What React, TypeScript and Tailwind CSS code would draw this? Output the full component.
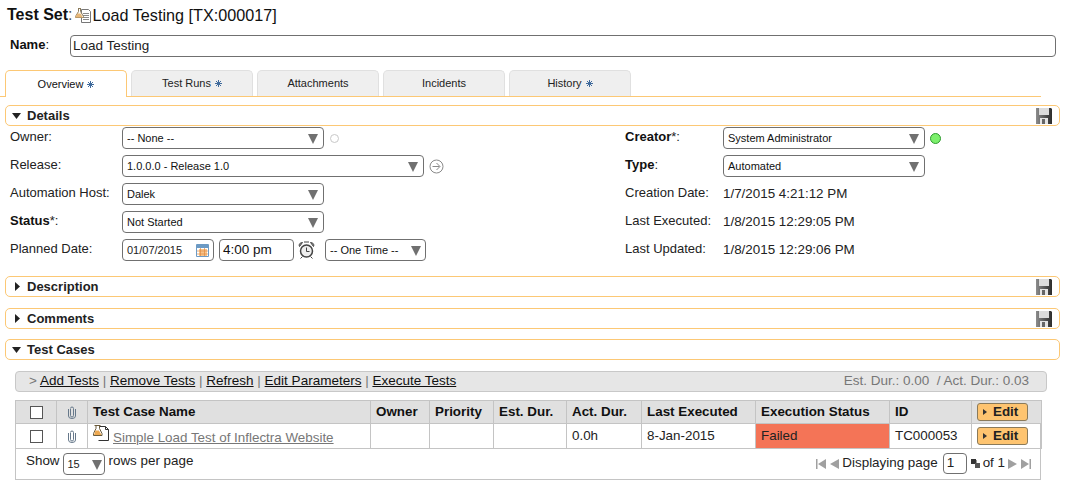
import type { ReactNode } from 'react'

function Arrow({ className = '' }: { className?: string }) {
  return (
    <svg className={className} width="10" height="11" viewBox="0 0 10 11">
      <path d="M0 1h10L5 11z" fill="#707070" />
    </svg>
  )
}

function Select({ text, className, arrow = 'pr-[5px]' }: { text: string; className: string; arrow?: string }) {
  return (
    <div className={`flex h-[22px] items-center justify-between rounded-[4px] border border-[#707070] bg-white pl-[4px] text-[11px] text-[#111] ${arrow} ${className}`}>
      <span>{text}</span>
      <Arrow />
    </div>
  )
}

function Star() {
  return (
    <svg className="ml-[4px] inline-block" width="7" height="7" viewBox="0 0 7 7" stroke="#3f6a9c" strokeWidth="1">
      <path d="M3.500 0v7M0 3.500h7M1 1l5 5M6 1L1 6" />
    </svg>
  )
}

function Tab({ label, active, star }: { label: string; active?: boolean; star?: boolean }) {
  return (
    <div
      className={
        active
          ? 'z-10 -mb-px flex h-[27px] w-[122px] items-center justify-center rounded-t-[5px] border border-b-0 border-[#fcc875] bg-white text-[11px] text-[#111]'
          : 'flex h-[26px] w-[122px] items-center justify-center rounded-t-[5px] border border-b-0 border-[#e0e0e0] bg-[#efefef] text-[11px] text-[#222]'
      }
    >
      {label}
      {star && <Star />}
    </div>
  )
}

function Floppy() {
  return (
    <svg width="16" height="16" viewBox="0 0 16 16">
      <defs>
        <linearGradient id="floppy" x1="0" x2="1" y1="0" y2="0">
          <stop offset="0" stopColor="#8c8c8c" />
          <stop offset="1" stopColor="#2c2c2c" />
        </linearGradient>
      </defs>
      <path d="M0 0h15l1 1v15H0z" fill="url(#floppy)" />
      <path d="M3 0h10v7H3z" fill="#dcdcdc" />
      <path d="M4 10h8v6H4z" fill="#e4e4e4" />
      <path d="M6 11h3v5H6z" fill="#666" />
    </svg>
  )
}

function SectionBar({ title, open, save }: { title: string; open?: boolean; save?: boolean }) {
  return (
    <div className="mr-[6px] ml-[5px] flex h-[21px] items-center justify-between rounded-[5px] border border-[#fcc875] bg-white pr-[7px] pl-[6px]">
      <div className="flex items-center text-[13px] font-bold text-[#222]">
        {open ? (
          <svg className="mr-[6px]" width="9" height="6" viewBox="0 0 9 6">
            <path d="M0 0h9L4.500 6z" fill="#222" />
          </svg>
        ) : (
          <svg className="mr-[7px] ml-[3px]" width="5" height="9" viewBox="0 0 5 9">
            <path d="M0 0l5 4.500L0 9z" fill="#222" />
          </svg>
        )}
        {title}
      </div>
      {save && <Floppy />}
    </div>
  )
}

function TestSetIcon() {
  return (
    <svg width="17" height="17" viewBox="0 0 17 17">
      <path d="M7.500 2.500h7l2 2v11h-9z" fill="#fff" stroke="#777" />
      <path d="M9 6.500h6M9 8.500h6M9 10.500h6M9 12.500h6" stroke="#8a8a8a" />
      <path d="M4 1.500h3M4.500 1.500v3l-3 5v1h8v-1l-3-5v-3" fill="#fff" stroke="#8a7a5a" />
      <path d="M3.500 6.500h3l2.500 4h-8z" fill="#e8b878" />
    </svg>
  )
}

function TestCaseIcon() {
  return (
    <svg width="17" height="17" viewBox="0 0 17 17">
      <path d="M5.500 1.500h7l3 3v11h-10" fill="#fff" stroke="#333" />
      <path d="M12.500 1.500v3h3" fill="none" stroke="#333" />
      <path d="M1.500 0.500h6M3 0.500v3l-2.500 5v2h8.500v-2l-2.500-5v-3" fill="#fff" stroke="#6a5a3a" />
      <path d="M2.500 5.500h3.500l2.500 4.500h-7.500z" fill="#eda850" />
    </svg>
  )
}

function Clip() {
  return (
    <svg className="mx-auto" width="8" height="13" viewBox="0 0 8 13" fill="none" stroke="#66788a" strokeWidth="1">
      <path d="M2.500 3v6.500a1.500 1.500 0 0 0 3 0V2.500a1.500 1.500 0 0 0-3 0M0.500 3v7a3.500 2.500 0 0 0 7 0V3" />
    </svg>
  )
}

function CheckBox() {
  return <div className="mx-auto h-[13px] w-[13px] border border-[#555] bg-white" />
}

function EditButton() {
  return (
    <div className="flex h-[18px] w-[51px] items-center rounded-[3px] border border-[#8a7a5a] bg-[#fec470] pl-[5px] text-[13.400px] font-bold text-[#222]">
      <svg className="mr-[6px]" width="4" height="6" viewBox="0 0 4 6">
        <path d="M0 0l4 3-4 3z" fill="#333" />
      </svg>
      Edit
    </div>
  )
}

function Label({ children, strong }: { children: ReactNode; strong?: string }) {
  return (
    <div className="text-[13px] text-[#222]">
      {strong && <b className="font-bold text-[#111]">{strong}</b>}
      {children}
    </div>
  )
}

function Row({ label, children }: { label: ReactNode; children: ReactNode }) {
  return (
    <>
      <div>{label}</div>
      <div className="flex h-[22px] items-center">{children}</div>
    </>
  )
}

function Value({ children }: { children: ReactNode }) {
  return <span className="text-[13.400px]">{children}</span>
}

function Pager({ d }: { d: string }) {
  return (
    <svg width="10" height="10" viewBox="0 0 10 10">
      <path d={d} fill="#a0a0a0" />
    </svg>
  )
}

const headers = ['Owner', 'Priority', 'Est. Dur.', 'Act. Dur.', 'Last Executed', 'Execution Status', 'ID']

const th = 'border border-[#c4c4c4] px-[5px] text-left font-bold'
const td = 'border border-[#c4c4c4] px-[5px]'

export default function App() {
  return (
    <div className="h-[487px] w-[1066px] overflow-hidden bg-white font-['Liberation_Sans',Arial,sans-serif] text-[#222]">
      <div className="flex h-[28px] items-center pt-[2px] pl-[7px] text-[16px] text-[#111]">
        <b className="font-bold">Test Set</b>
        <span className="text-[#555]">:</span>
        <span className="ml-[1px] flex">
          <TestSetIcon />
        </span>
        <span className="ml-[2px] text-[16.200px]">Load Testing [TX:000017]</span>
      </div>

      <div className="mt-[7px] flex items-start pr-[10px] pl-[10px]">
        <b className="w-[60px] text-[13px] font-bold text-[#111]">
          Name<span className="font-normal">:</span>
        </b>
        <div className="flex h-[22px] flex-1 items-center rounded-[4px] border border-[#707070] pl-[2px] text-[13.500px] text-[#222]">
          Load Testing
        </div>
      </div>

      <div className="mt-[13px] mr-[25px] flex gap-[4px] border-b border-[#fcc875] pl-[5px]">
        <Tab label="Overview" active star />
        <Tab label="Test Runs" star />
        <Tab label="Attachments" />
        <Tab label="Incidents" />
        <Tab label="History" star />
      </div>

      <div className="mt-[8px]">
        <SectionBar title="Details" open save />
      </div>

      <div className="mt-[1px] grid grid-cols-[112px_503px_98px_1fr] gap-y-[6px] pl-[10px]">
        <Row label={<Label>Owner:</Label>}>
          <Select text="-- None --" className="w-[202px]" />
          <div className="ml-[6px] h-[9px] w-[9px] rounded-full border border-[#c8c8c8]" />
        </Row>
        <Row label={<Label strong="Creator">*:</Label>}>
          <Select text="System Administrator" className="w-[202px]" />
          <div className="ml-[5px] h-[11px] w-[11px] rounded-full border border-[#2f9a2f] bg-[#7cf06c]" />
        </Row>

        <Row label={<Label>Release:</Label>}>
          <Select text="1.0.0.0 - Release 1.0" className="w-[302px]" />
          <svg className="ml-[5px]" width="15" height="15" viewBox="0 0 15 15" fill="none" stroke="#8a8a8a">
            <circle cx="7.500" cy="7.500" r="6.500" />
            <path d="M3.500 7.500h7M7.500 4l3.500 3.500L7.500 11" />
          </svg>
        </Row>
        <Row label={<Label strong="Type">:</Label>}>
          <Select text="Automated" className="w-[202px]" />
        </Row>

        <Row label={<Label>Automation Host:</Label>}>
          <Select text="Dalek" className="w-[202px]" />
        </Row>
        <Row label={<Label>Creation Date:</Label>}>
          <Value>1/7/2015 4:21:12 PM</Value>
        </Row>

        <Row label={<Label strong="Status">*:</Label>}>
          <Select text="Not Started" className="w-[202px]" />
        </Row>
        <Row label={<Label>Last Executed:</Label>}>
          <Value>1/8/2015 12:29:05 PM</Value>
        </Row>

        <Row label={<Label>Planned Date:</Label>}>
          <div className="flex h-[22px] w-[92px] items-center justify-between rounded-[4px] border border-[#707070] pr-[4px] pl-[4px] text-[11px]">
            01/07/2015
            <svg width="13" height="13" viewBox="0 0 13 13">
              <path d="M0.500 0.500h12v12h-12z" fill="#fff" stroke="#6c9ac4" />
              <path d="M1 1h11v3H1z" fill="#6c9ac4" />
              <path d="M3 5h8v7H3z" fill="#f7c48c" />
              <path d="M1 7h11M1 10h11M4.500 4v8M8.500 4v8" stroke="#e08a40" strokeWidth="0.700" />
            </svg>
          </div>
          <div className="ml-[5px] flex h-[22px] w-[75px] items-center rounded-[4px] border border-[#707070] pl-[3px] text-[13.500px] text-[#111]">
            4:00 pm
          </div>
          <svg className="ml-[4px]" width="17" height="18" viewBox="0 0 17 18" fill="none" stroke="#444">
            <circle cx="8.500" cy="10" r="6" fill="#eee" strokeWidth="1.500" />
            <path d="M8.500 6.500v4h3" />
            <path d="M1.500 5.500c-1-2 .5-4 3-4zM15.500 5.500c1-2-.5-4-3-4z" fill="#999" />
            <path d="M6 1h5" />
            <path d="M4.500 15.500l-2 2M12.500 15.500l2 2" />
          </svg>
          <Select text="-- One Time --" className="ml-[10px] w-[101px]" arrow="pr-[4px]" />
        </Row>
        <Row label={<Label>Last Updated:</Label>}>
          <Value>1/8/2015 12:29:06 PM</Value>
        </Row>
      </div>

      <div className="mt-[15px]">
        <SectionBar title="Description" save />
      </div>
      <div className="mt-[11px]">
        <SectionBar title="Comments" save />
      </div>
      <div className="mt-[10px]">
        <SectionBar title="Test Cases" open />
      </div>

      <div className="mt-[11px] mr-[19px] ml-[15px] flex h-[21px] items-center justify-between rounded-[4px] border border-[#c8c8c8] bg-[#e6e6e6] pr-[17px] pl-[13px] text-[13.500px]">
        <div className="text-[#777]">
          {'> '}
          <span className="text-[#111] underline">Add Tests</span> |{' '}
          <span className="text-[#111] underline">Remove Tests</span> |{' '}
          <span className="text-[#111] underline">Refresh</span> |{' '}
          <span className="text-[#111] underline">Edit Parameters</span> |{' '}
          <span className="text-[#111] underline">Execute Tests</span>
        </div>
        <div className="whitespace-pre text-[#777]">Est. Dur.: 0.00  / Act. Dur.: 0.03</div>
      </div>

      <div className="mt-[8px] mr-[25px] ml-[15px] h-[80px] border border-[#c4c4c4]">
        <table className="-mt-px -ml-px w-[1026px] table-fixed border-collapse text-[13.400px]">
          <colgroup>
            <col className="w-[41px]" />
            <col className="w-[31px]" />
            <col className="w-[283px]" />
            <col className="w-[59px]" />
            <col className="w-[64px]" />
            <col className="w-[73px]" />
            <col className="w-[75px]" />
            <col className="w-[114px]" />
            <col className="w-[134px]" />
            <col className="w-[82px]" />
            <col className="w-[70px]" />
          </colgroup>
          <thead>
            <tr className="h-[23px] bg-[#e0e0e0] text-[#111]">
              <th className={th}><CheckBox /></th>
              <th className={th}><Clip /></th>
              <th className={th}>Test Case Name</th>
              {headers.map(h => (
                <th className={th} key={h}>{h}</th>
              ))}
              <th className={th}><EditButton /></th>
            </tr>
          </thead>
          <tbody>
            <tr className="h-[25px]">
              <td className={td}><CheckBox /></td>
              <td className={td}><Clip /></td>
              <td className={td}>
                <span className="flex h-[23px] items-start">
                  <TestCaseIcon />
                  <span className="mt-[3px] ml-[3px] text-[#777] underline">Simple Load Test of Inflectra Website</span>
                </span>
              </td>
              <td className={td} />
              <td className={td} />
              <td className={td} />
              <td className={td}>0.0h</td>
              <td className={td}>8-Jan-2015</td>
              <td className={`${td} bg-[#f47457]`}>Failed</td>
              <td className={td}>TC000053</td>
              <td className={td}><EditButton /></td>
            </tr>
          </tbody>
        </table>
        <div className="flex h-[31px] items-start justify-between pr-[9px] pl-[10px] text-[13.400px]">
          <div className="flex items-start">
            <span className="mt-[2px]">Show</span>
            <div className="mt-[4px] ml-[3px] flex h-[22px] w-[42px] items-center justify-between rounded-[4px] border border-[#707070] pr-[2px] pl-[4px] text-[11px]">
              15
              <Arrow />
            </div>
            <span className="mt-[2px] ml-[4px]">rows per page</span>
          </div>
          <div className="mt-[4px] flex items-center">
            <Pager d="M0 0h1.500v10H0zM10 0v10L2 5z" />
            <span className="ml-[3px] flex">
              <Pager d="M10 0v10L1 5z" />
            </span>
            <span className="ml-[3px]">Displaying page</span>
            <div className="ml-[5px] flex h-[21px] w-[24px] items-center rounded-[4px] border border-[#707070] pl-[3px] text-[13.500px]">1</div>
            <svg className="ml-[4px]" width="9" height="9" viewBox="0 0 9 9">
              <path d="M0 0h5v5H0z" fill="#333" />
              <path d="M4 4h5v5H4z" fill="#555" />
              <path d="M5 1h1v3H5z" fill="#999" />
            </svg>
            <span className="ml-[3px]">of 1</span>
            <span className="ml-[3px] flex">
              <Pager d="M0 0v10l9-5z" />
              <span className="ml-[3px]">
                <Pager d="M0 0v10l8-5zM8.500 0H10v10H8.500z" />
              </span>
            </span>
          </div>
        </div>
      </div>
    </div>
  )
}
